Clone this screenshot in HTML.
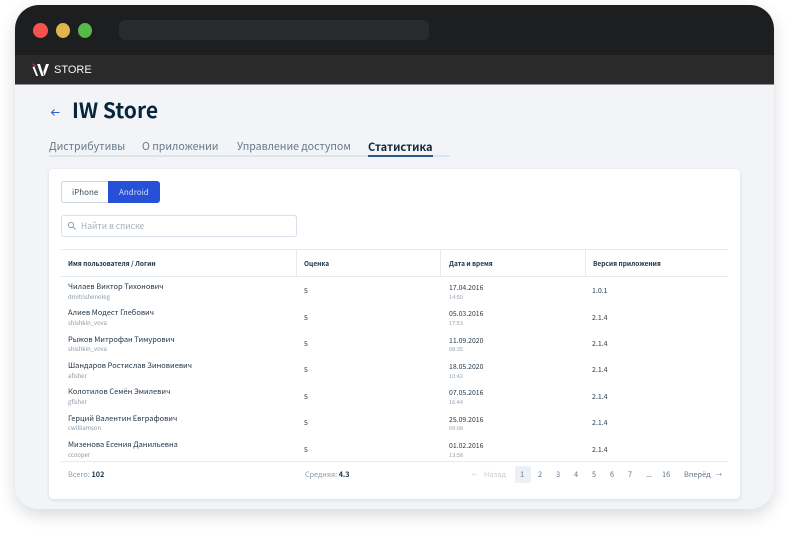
<!DOCTYPE html>
<html><head><meta charset="utf-8"><style>
html,body{margin:0;padding:0;width:789px;height:534px;overflow:hidden;background:#fff;font-family:"Noto Sans CJK SC","Liberation Sans",sans-serif}
div,span{position:absolute;white-space:nowrap}
#w{left:15px;top:5px;width:759px;height:504px;border-radius:24px;background:#f2f4f7;overflow:hidden}
#s{left:15px;top:5px;width:759px;height:504px;border-radius:24px;box-shadow:0 6px 16px rgba(40,50,60,.18)}
.n{font-size:7.45px;color:#1f3344;line-height:10px;left:68px;margin-top:1px}
.l{font-size:5.9px;color:#8d97a6;line-height:8px;left:68px;margin-top:1px}
.r{font-size:7px;color:#26394a;line-height:10px;left:304px;margin-top:1px}
.d{font-size:6.9px;color:#26394a;line-height:10px;left:449px;margin-top:1px}
.t{font-size:5.6px;color:#98a2ae;line-height:8px;left:449px;margin-top:1px}
.v{font-size:7px;color:#26394a;line-height:10px;left:592px;margin-top:1px}
.h{font-size:6.5px;font-weight:bold;color:#1c3346;line-height:10px;top:258px}
.tab{font-size:10.6px;color:#66788a;line-height:16px;top:139px}
.p{font-size:7.4px;color:#5d7690;line-height:10px;top:470px}
</style></head><body>
<div id="s"></div>
<div id="w"></div>
<div style="left:15px;top:5px;width:759px;height:504px;border-radius:24px;overflow:hidden">
<div style="left:0;top:0;width:759px;height:50px;background:#1d1e20"></div>
<div style="left:0;top:50px;width:759px;height:29px;background:#2a2a2a"></div>
<div style="left:0;top:79px;width:759px;height:1px;background:#8d8f91"></div>
</div>
<div style="left:33px;top:23px;width:15px;height:15px;border-radius:50%;background:#f65350"></div>
<div style="left:56px;top:23px;width:14px;height:15px;border-radius:50%;background:#e0b54c"></div>
<div style="left:78px;top:23px;width:14px;height:15px;border-radius:50%;background:#58b84a"></div>
<div style="left:119px;top:20px;width:310px;height:20px;border-radius:6px;background:#282b2e"></div>
<svg style="position:absolute;left:31px;top:62px" width="20" height="15" viewBox="0 0 20 15">
<path d="M1 1L5 3.5L4.6 4.6L2 3.4Z" fill="#e0202a"/>
<path d="M1.5 5L3.5 4.5L7 14L5.2 14Z" fill="#fff"/>
<path d="M6 2H9L12.8 14H10.5Z" fill="#fff"/>
<path d="M12.3 10L15 2H18L13.6 14Z" fill="#fff"/>
</svg>
<span style="left:54px;top:63px;font-size:11px;line-height:15px;color:#f6f6f6;font-family:'Liberation Sans',sans-serif">STORE</span>
<svg style="position:absolute;left:50px;top:107px" width="11" height="11" viewBox="0 0 11 11"><path d="M9.5 5.5H1.5M4.5 2.5L1.5 5.5L4.5 8.5" fill="none" stroke="#2b5bd7" stroke-width="1"/></svg>
<span style="left:72px;top:97px;font-size:21px;font-weight:bold;line-height:26px;color:#07263c">IW Store</span>
<span class="tab" style="left:49px">Дистрибутивы</span>
<span class="tab" style="left:142px">О приложении</span>
<span class="tab" style="left:237px">Управление доступом</span>
<span class="tab" style="left:368px;font-weight:bold;color:#10293d;font-size:11.1px">Статистика</span>
<div style="left:49px;top:155px;width:401px;height:2px;background:#dde5ec"></div>
<div style="left:368px;top:155px;width:65px;height:2px;background:#2c5a86"></div>
<div style="left:49px;top:169px;width:691px;height:330px;background:#fff;border-radius:4px;box-shadow:0 1px 3px rgba(60,80,100,.16)"></div>
<div style="left:61px;top:181px;width:48px;height:20px;border:1px solid #ccd5e0;border-radius:3px 0 0 3px"></div>
<span style="left:72px;top:187px;font-size:8px;line-height:11px;color:#394c5e">iPhone</span>
<div style="left:108px;top:181px;width:52px;height:22px;background:#2650d6;border-radius:0 3px 3px 0"></div>
<span style="left:119px;top:187px;font-size:8px;line-height:11px;color:#d5def8">Android</span>
<div style="left:61px;top:215px;width:234px;height:20px;border:1px solid #d8e0e9;border-radius:3px"></div>
<svg style="position:absolute;left:67px;top:221px" width="10" height="10" viewBox="0 0 10 10"><circle cx="4" cy="4" r="2.6" fill="none" stroke="#9aa5b2" stroke-width="1.1"/><path d="M6 6L8.5 8.5" stroke="#9aa5b2" stroke-width="1.2"/></svg>
<span style="left:81px;top:221px;font-size:8.5px;line-height:11px;color:#a3adb9;">Найти в списке</span>
<div style="left:61px;top:249px;width:667px;height:1px;background:#e6ebf0"></div>
<div style="left:61px;top:276px;width:667px;height:1px;background:#e6ebf0"></div>
<div style="left:296px;top:249px;width:1px;height:28px;background:#e6ebf0"></div>
<div style="left:440px;top:249px;width:1px;height:28px;background:#e6ebf0"></div>
<div style="left:585px;top:249px;width:1px;height:28px;background:#e6ebf0"></div>
<span class="h" style="left:68px">Имя пользователя / Логин</span>
<span class="h" style="left:304px">Оценка</span>
<span class="h" style="left:449px">Дата и время</span>
<span class="h" style="left:593px">Версия приложения</span>

<span class="n" style="top:281px">Чилаев Виктор Тихонович</span><span class="l" style="top:292px">dmitrishenoleg</span><span class="r" style="top:285px">5</span><span class="d" style="top:281px">17.04.2016</span><span class="t" style="top:292px">14:50</span><span class="v" style="top:285px">1.0.1</span>
<span class="n" style="top:307px">Алиев Модест Глебович</span><span class="l" style="top:318px">shishkin_vova</span><span class="r" style="top:312px">5</span><span class="d" style="top:307px">05.03.2016</span><span class="t" style="top:318px">17:53</span><span class="v" style="top:312px">2.1.4</span>
<span class="n" style="top:334px">Рыжов Митрофан Тимурович</span><span class="l" style="top:344px">shishkin_vova</span><span class="r" style="top:338px">5</span><span class="d" style="top:334px">11.09.2020</span><span class="t" style="top:344px">08:35</span><span class="v" style="top:338px">2.1.4</span>
<span class="n" style="top:360px">Шандаров Ростислав Зиновиевич</span><span class="l" style="top:371px">afisher</span><span class="r" style="top:364px">5</span><span class="d" style="top:360px">18.05.2020</span><span class="t" style="top:371px">10:42</span><span class="v" style="top:364px">2.1.4</span>
<span class="n" style="top:386px">Колотилов Семён Эмилевич</span><span class="l" style="top:397px">gfisher</span><span class="r" style="top:391px">5</span><span class="d" style="top:386px">07.05.2016</span><span class="t" style="top:397px">16:44</span><span class="v" style="top:391px">2.1.4</span>
<span class="n" style="top:413px">Герций Валентин Евграфович</span><span class="l" style="top:423px">cwilliamson</span><span class="r" style="top:417px">5</span><span class="d" style="top:413px">25.09.2016</span><span class="t" style="top:423px">09:08</span><span class="v" style="top:417px">2.1.4</span>
<span class="n" style="top:439px">Мизенова Есения Данильевна</span><span class="l" style="top:450px">ccooper</span><span class="r" style="top:444px">5</span><span class="d" style="top:439px">01.02.2016</span><span class="t" style="top:450px">13:58</span><span class="v" style="top:444px">2.1.4</span>

<div style="left:61px;top:461px;width:667px;height:1px;background:#e6ebf0"></div>
<span style="left:68px;top:470px;font-size:7.3px;line-height:10px;color:#8f9aa8">Всего: <b style="color:#1c3346">102</b></span>
<span style="left:305px;top:470px;font-size:7.2px;line-height:10px;color:#8f9aa8">Средняя: <b style="color:#1c3346">4.3</b></span>
<span class="p" style="left:472px;color:#c3ccd6;font-size:6px">←</span><span class="p" style="left:484px;color:#c3ccd6">Назад</span>
<div style="left:515px;top:466px;width:16px;height:17px;background:#ecf1f5;border-radius:2px"></div>
<span class="p" style="left:520px">1</span><span class="p" style="left:538px">2</span><span class="p" style="left:556px">3</span><span class="p" style="left:574px">4</span><span class="p" style="left:592px">5</span><span class="p" style="left:610px">6</span><span class="p" style="left:628px">7</span><span class="p" style="left:646px">...</span><span class="p" style="left:662px">16</span>
<span class="p" style="left:684px">Вперёд</span><span class="p" style="left:716px;font-size:6px">→</span>
</body></html>
